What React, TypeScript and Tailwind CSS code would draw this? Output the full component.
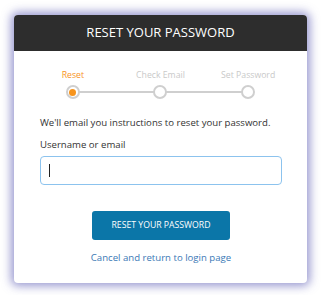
import React from "react";

export default function App() {
  const steps = [
    { label: "Reset", active: true },
    { label: "Check Email", active: false },
    { label: "Set Password", active: false },
  ];
  return (
    <div
      className="w-[321px] h-[295px] bg-white pt-[15px] pl-[14px]"
      style={{ fontFamily: '"Open Sans", "Liberation Sans", sans-serif' }}
    >
      <div className="w-[293px] h-[268px] bg-white rounded-[4px] overflow-hidden shadow-[0_0_10px_3px_rgba(70,70,170,0.55)] flex flex-col">
        <div className="h-[36px] shrink-0 bg-[#2d2d2d] flex items-center justify-center text-white text-[13px]">
          RESET YOUR PASSWORD
        </div>
        <div className="relative mt-[18px] mx-[15px] grid grid-cols-3">
          <div className="absolute left-[44px] right-[44px] top-[22px] h-[2px] bg-[#cfcfcf]" />
          {steps.map((s) => (
            <div key={s.label} className="relative flex flex-col items-center">
              <div
                className={`text-[8.7px] leading-[12px] ${s.active ? "text-[#f7941d]" : "text-[#c9c9c9]"}`}
              >
                {s.label}
              </div>
              <div className="mt-[4px] w-[14px] h-[14px] rounded-full border-2 border-[#cfcfcf] bg-white flex items-center justify-center">
                {s.active && <div className="w-[7px] h-[7px] rounded-full bg-[#f7941d]" />}
              </div>
            </div>
          ))}
        </div>
        <div className="pl-[26px] pr-[25px]">
          <p className="mt-[17px] text-[9.6px] leading-[14px] text-[#333]">
            We'll email you instructions to reset your password.
          </p>
          <p className="mt-[8px] text-[9.6px] leading-[14px] text-[#333]">Username or email</p>
          <div className="mt-[4px] h-[29px] w-full rounded-[4px] border border-[#8cc3ee] flex items-center pl-[8px]">
            <div className="w-[1px] h-[13px] bg-[#222]" />
          </div>
          <div className="mt-[26px] flex justify-center">
            <button className="w-[138px] h-[29px] rounded-[3px] bg-[#0b76a8] text-white text-[8.7px]">
              RESET YOUR PASSWORD
            </button>
          </div>
          <div className="mt-[11px] text-center text-[9.6px] leading-[14px] text-[#3b79b6]">
            Cancel and return to login page
          </div>
        </div>
      </div>
    </div>
  );
}
